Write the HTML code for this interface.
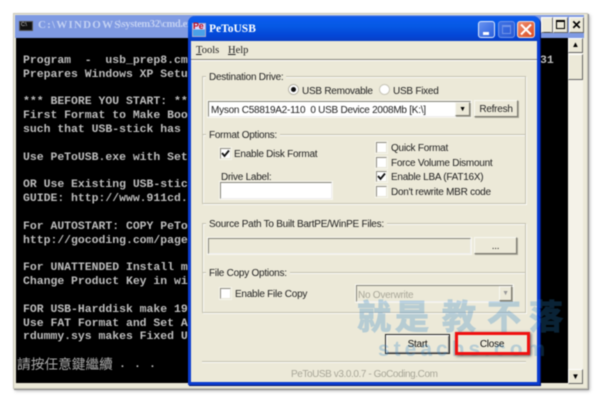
<!DOCTYPE html>
<html><head><meta charset="utf-8">
<style>
html,body{margin:0;padding:0;width:600px;height:401px;overflow:hidden;background:#fff}
#r{position:relative;width:600px;height:401px;overflow:hidden;filter:blur(0.4px);font-family:"Liberation Sans",sans-serif;font-size:10px;letter-spacing:-.25px;color:#222}
#r div,#r span{position:absolute;box-sizing:border-box;white-space:pre}
.g{border:1px solid #c4c2b2;box-shadow:inset 1px 1px 0 #fbfaf6,1px 1px 0 #fbfaf6}
.l{background:#ece9d8;padding:0 3px;height:13px;line-height:13px;margin-top:0;line-height:15px}
.t{line-height:15px;height:15px}
.c{width:11px;height:11px;background:#fff;border:1px solid #8d8b80;border-right-color:#e8e6d8;border-bottom-color:#e8e6d8;box-shadow:0 0 0 1px #f6f5ec}
.in{background:#fff;border:1px solid #85847a;border-right-color:#eee;border-bottom-color:#eee;box-shadow:0 0 0 1px #f8f7f0}
.b{background:#ece9d8;border:1px solid #f8f8f2;border-right-color:#77766c;border-bottom-color:#77766c;box-shadow:1px 1px 0 #aaa89a;text-align:center}
.cmd{font-family:"Liberation Mono","DejaVu Sans Mono",monospace;font-weight:bold;font-size:11.45px;color:#bdbdbd;line-height:14px;height:14px;left:23px;letter-spacing:0}
.wb{width:15px;height:15px;background:#ece9d8;border:1px solid #fff;border-right-color:#666;border-bottom-color:#666;color:#000;text-align:center;font-weight:bold;font-size:11px;line-height:13px;letter-spacing:0}
.wm{top:296px;width:36px;height:38px;font-family:'Noto Sans CJK SC','Noto Serif CJK SC',sans-serif;font-weight:bold;font-size:34px;line-height:38px;color:#2880c8;opacity:.27;letter-spacing:0;-webkit-text-stroke:1px #2880c8}
</style></head><body><div id="r">

<!-- cmd window -->
<div style="left:13px;top:13px;width:575px;height:376px;background:#ece9d8;border:1px solid #c8c6b8;box-shadow:1px 1px 0 #888,2px 2px 3px #bbb"></div>
<div style="left:15px;top:15px;width:569px;height:23px;background:#7f9ae2"></div>
<div style="left:19px;top:21px;width:14px;height:10px;background:#111;border:1px solid #555"></div>
<div style="left:21px;top:22px;color:#ddd;font-size:5px;line-height:6px">C:\</div>
<div style="left:38px;top:17px;font-family:'Liberation Serif',serif;font-weight:bold;font-size:11px;line-height:16px;color:#c3d1f3;letter-spacing:1.2px">C:\WINDOWS</div>
<div style="left:119px;top:17px;font-family:'Liberation Serif',serif;font-weight:bold;font-size:10.5px;line-height:16px;color:#c3d1f3;letter-spacing:-.35px">\system32\cmd.exe</div>
<div class="wb" style="left:541px;top:17px;width:12px;height:16px;line-height:20px">_</div>
<div class="wb" style="left:553px;top:17px;width:15px;height:16px"><div style="left:2px;top:2px;width:9px;height:9px;border:1px solid #000;border-top-width:2px"></div></div>
<div class="wb" style="left:569px;top:17px;height:16px;line-height:15px;font-size:12px">✕</div>
<div style="left:16px;top:38px;width:553px;height:345px;background:#000"></div>
<div style="left:568px;top:38px;width:15px;height:345px;background:#f4f2e8"></div>
<div class="wb" style="left:568px;top:38px;font-size:8px;line-height:12px">▲</div>
<div class="wb" style="left:568px;top:54px;height:26px"></div>
<div class="wb" style="left:568px;top:369px;font-size:8px;line-height:13px">▼</div>

<div class="cmd" style="top:54px">Program  -  usb_prep8.cmd</div>
<div class="cmd" style="top:68px">Prepares Windows XP Setup</div>
<div class="cmd" style="top:95px">*** BEFORE YOU START: ***</div>
<div class="cmd" style="top:109px">First Format to Make Boot</div>
<div class="cmd" style="top:123px">such that USB-stick has</div>
<div class="cmd" style="top:151px">Use PeToUSB.exe with Set</div>
<div class="cmd" style="top:178px">OR Use Existing USB-stic</div>
<div class="cmd" style="top:192px">GUIDE: http://www.911cd.</div>
<div class="cmd" style="top:220px">For AUTOSTART: COPY PeTo</div>
<div class="cmd" style="top:234px">http://gocoding.com/page</div>
<div class="cmd" style="top:261px">For UNATTENDED Install m</div>
<div class="cmd" style="top:275px">Change Product Key in wi</div>
<div class="cmd" style="top:303px">FOR USB-Harddisk make 19</div>
<div class="cmd" style="top:317px">Use FAT Format and Set A</div>
<div class="cmd" style="top:330px">rdummy.sys makes Fixed U</div>
<div class="cmd" style="left:17px;top:355px;font-family:'Noto Sans CJK TC',monospace;font-weight:normal;font-size:13.7px;line-height:16px;height:16px;color:#a8a8a8">請按任意鍵繼續</div>
<div class="cmd" style="left:119px;top:358px">.</div>
<div class="cmd" style="left:134px;top:358px">.</div>
<div class="cmd" style="left:149px;top:358px">.</div>
<div class="cmd" style="left:540px;top:54px">31</div>

<!-- PeToUSB window -->
<div style="left:188px;top:16px;width:352px;height:369px;background:#ece9d8;border:3px solid #0a3ccf;border-top:0;border-radius:7px 7px 0 0;box-shadow:1px 1px 0 #00146e"></div>
<div style="left:188px;top:16px;width:352px;height:25px;border-radius:7px 7px 0 0;background:linear-gradient(#1b5fe6 0,#0a5bee 12%,#0659e4 40%,#0446d6 80%,#0a3fc4 100%)"></div>
<div style="left:192px;top:23px;width:14px;height:14px;background:linear-gradient(#d8d8ff 45%,#4aa0e8 45%);border:1px solid #aac"></div>
<div style="left:193px;top:22px;color:#c01020;font-weight:bold;font-size:9px;line-height:9px">Pe</div>
<div style="left:209px;top:22px;font-family:'Liberation Serif',serif;font-weight:bold;font-size:11.5px;line-height:15px;color:#fff;letter-spacing:0">PeToUSB</div>

<div style="left:478px;top:21px;width:17px;height:17px;border:1px solid #dfe8fa;border-radius:3px;background:linear-gradient(135deg,#6a94f0,#2a5fdc)"><div style="left:4px;top:10px;width:6px;height:3px;background:#fff"></div></div>
<div style="left:498px;top:21px;width:17px;height:17px;border:1px solid #6f93e8;border-radius:3px;background:linear-gradient(135deg,#3f72e4,#2a5ad4)"><div style="left:3px;top:3px;width:9px;height:9px;border:1px solid #6f93e8;border-top-width:2px"></div></div>
<div style="left:517px;top:21px;width:18px;height:17px;border:1px solid #f4ddd2;border-radius:3px;background:linear-gradient(135deg,#f09070,#d84a20)"></div>
<svg style="position:absolute;left:517px;top:21px" width="18" height="17"><path d="M4 3.5 L14 13.5 M14 3.5 L4 13.5" stroke="#fff" stroke-width="2"/></svg>

<div class="t" style="left:196px;top:43px;font-family:'Liberation Serif',serif;font-size:10.5px;letter-spacing:0"><u>T</u>ools</div>
<div class="t" style="left:228px;top:43px;font-family:'Liberation Serif',serif;font-size:10.5px;letter-spacing:0"><u>H</u>elp</div>
<div style="left:191px;top:59px;width:346px;height:1px;background:#85847a"></div>
<div style="left:191px;top:60px;width:346px;height:1px;background:#fff"></div>

<!-- Groups -->
<div class="g" style="left:202px;top:76px;width:324px;height:59px"></div>
<div class="g" style="left:202px;top:134px;width:324px;height:70px"></div>
<div class="g" style="left:202px;top:223px;width:324px;height:50px"></div>
<div class="g" style="left:202px;top:272px;width:324px;height:41px"></div>
<div class="l" style="left:206px;top:70px">Destination Drive:</div>
<div class="l" style="left:206px;top:128px">Format Options:</div>
<div class="l" style="left:206px;top:217px">Source Path To Built BartPE/WinPE Files:</div>
<div class="l" style="left:206px;top:266px">File Copy Options:</div>

<!-- Radio -->
<div style="left:288px;top:84px;width:11px;height:11px;border-radius:50%;background:#fff;border:1px solid #b8b6a8"></div>
<div style="left:291px;top:87px;width:5px;height:5px;border-radius:50%;background:#111"></div>
<div class="t" style="left:302px;top:84px">USB Removable</div>
<div style="left:379px;top:84px;width:11px;height:11px;border-radius:50%;background:#fff;border:1px solid #c8c6b8"></div>
<div class="t" style="left:393px;top:84px">USB Fixed</div>

<!-- Combo -->
<div class="in" style="left:208px;top:101px;width:263px;height:16px"></div>
<div class="t" style="left:211px;top:103px">Myson C58819A2-110  0 USB Device 2008Mb [K:\]</div>
<div class="b" style="left:455px;top:102px;width:15px;height:14px;color:#000;font-size:7px;line-height:13px">▼</div>
<div class="b" style="left:474px;top:100px;width:44px;height:17px;line-height:17px">Refresh</div>

<!-- Format -->
<div class="c" style="left:220px;top:148px"></div>
<svg style="position:absolute;left:220px;top:148px" width="11" height="11"><path d="M2 5 L4.5 8 L9 2.5" fill="none" stroke="#111" stroke-width="1.8"/></svg>
<div class="t" style="left:234px;top:147px">Enable Disk Format</div>
<div class="t" style="left:221px;top:170px">Drive Label:</div>
<div class="in" style="left:220px;top:182px;width:112px;height:17px"></div>

<div class="c" style="left:376px;top:142px"></div>
<div class="t" style="left:391px;top:141px">Quick Format</div>
<div class="c" style="left:376px;top:157px"></div>
<div class="t" style="left:391px;top:156px">Force Volume Dismount</div>
<div class="c" style="left:376px;top:171px"></div>
<svg style="position:absolute;left:376px;top:171px" width="11" height="11"><path d="M2 5 L4.5 8 L9 2.5" fill="none" stroke="#111" stroke-width="1.8"/></svg>
<div class="t" style="left:391px;top:170px">Enable LBA (FAT16X)</div>
<div class="c" style="left:376px;top:186px"></div>
<div class="t" style="left:391px;top:185px">Don't rewrite MBR code</div>

<!-- Source path -->
<div class="in" style="left:208px;top:238px;width:263px;height:16px;background:#ece9d8"></div>
<div class="b" style="left:474px;top:237px;width:43px;height:17px;line-height:17px">...</div>

<!-- File copy -->
<div class="c" style="left:220px;top:288px"></div>
<div class="t" style="left:235px;top:287px">Enable File Copy</div>
<div class="in" style="left:356px;top:285px;width:157px;height:17px;background:#ece9d8"></div>
<div class="t" style="left:358px;top:288px;color:#a8a698">No Overwrite</div>
<div class="b" style="left:499px;top:286px;width:13px;height:15px;color:#999;font-size:7px;line-height:14px">▼</div>

<!-- Bottom -->
<div style="left:202px;top:361px;width:324px;height:1px;background:#c4c2b2"></div>
<div style="left:202px;top:362px;width:324px;height:1px;background:#fbfaf6"></div>
<div class="t" style="left:291px;top:367px;color:#a8a698;letter-spacing:-.42px">PeToUSB v3.0.0.7 - GoCoding.Com</div>

<div style="left:385px;top:334px;width:65px;height:20px;background:#ece9d8;border:1px solid #222;box-shadow:inset 1px 1px 0 #fff,inset -1px -1px 0 #888;text-align:center;line-height:19px;color:#111">Start</div>
<div style="left:456px;top:333px;width:72px;height:22px;background:#ece9d8;text-align:center;line-height:23px;color:#111">Close</div>

<!-- Watermark -->
<div class="wm" style="left:357px">就</div>
<div class="wm" style="left:395px">是</div>
<div class="wm" style="left:442px">教</div>
<div class="wm" style="left:487px">不</div>
<div class="wm" style="left:529px">落</div>
<div style="left:378px;top:338px;font-family:'Liberation Sans',sans-serif;font-weight:bold;font-size:21px;line-height:24px;color:#2880c8;opacity:.27;letter-spacing:4px">steachs.com</div>

<div style="left:455px;top:332px;width:75px;height:23px;border:3px solid #f01010;box-shadow:1px 1px 3px #555"></div>
</div></body></html>
